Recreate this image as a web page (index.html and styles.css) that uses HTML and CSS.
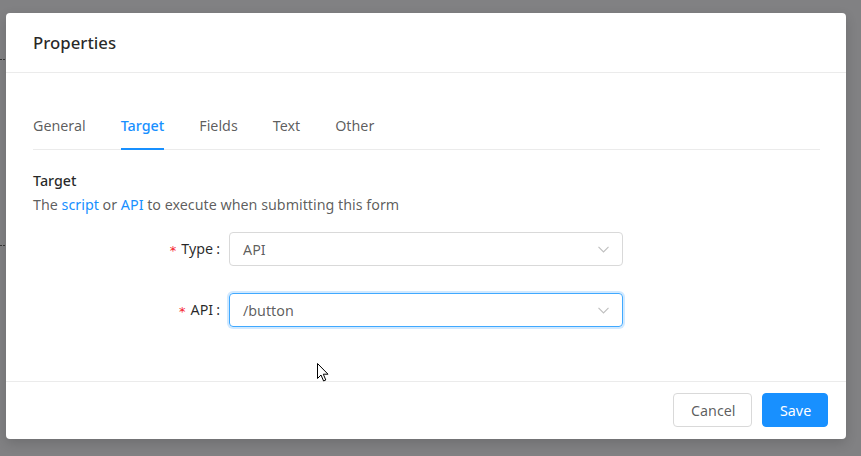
FILE: index.html
```html
<!DOCTYPE html>
<html lang="en">
<head>
<meta charset="utf-8">
<title>Properties</title>
<link rel="stylesheet" href="styles.css">
</head>
<body>
<div class="page-mark mark-a"></div>
<div class="page-mark mark-b"></div>
<div class="modal">
  <div class="modal-header">
    <div class="modal-title">Properties</div>
  </div>
  <div class="modal-body">
    <div class="tabs">
      <div class="tab">General</div>
      <div class="tab active">Target</div>
      <div class="tab">Fields</div>
      <div class="tab">Text</div>
      <div class="tab">Other</div>
    </div>
    <div class="section-title">Target</div>
    <div class="section-desc">The <a class="link">script</a> or <a class="link">API</a> to execute when submitting this form</div>
    <div class="form">
      <div class="form-row">
        <div class="form-label"><span class="req">*</span>Type<span class="colon">:</span></div>
        <div class="select">
          <span class="select-value">API</span>
          <svg class="arrow" width="11" height="7" viewBox="0 0 11 7"><path d="M0.5 0.8 L5.5 6 L10.5 0.8" fill="none" stroke="#bfbfbf" stroke-width="1.1"/></svg>
        </div>
      </div>
      <div class="form-row">
        <div class="form-label"><span class="req">*</span>API<span class="colon">:</span></div>
        <div class="select focused">
          <span class="select-value">/button</span>
          <svg class="arrow" width="11" height="7" viewBox="0 0 11 7"><path d="M0.5 0.8 L5.5 6 L10.5 0.8" fill="none" stroke="#bfbfbf" stroke-width="1.1"/></svg>
        </div>
      </div>
    </div>
  </div>
  <div class="modal-footer">
    <button class="btn">Cancel</button>
    <button class="btn btn-primary">Save</button>
  </div>
</div>
<svg class="cursor" width="13" height="20" viewBox="0 0 13 20"><path d="M0.5 0.5 L0.5 15.5 L4 12 L6.6 18 L8.8 17 L6.3 11.2 L11 11.2 Z" fill="#fff" stroke="#000" stroke-width="1" stroke-linejoin="miter"/></svg>
</body>
</html>
```
FILE: styles.css
```css
html, body {
  margin: 0;
  padding: 0;
}
body {
  background: #818183;
  width: 861px;
  height: 456px;
  overflow: hidden;
  font-family: "Noto Sans", "Open Sans", sans-serif;
  font-size: 14.3px;
  color: rgba(0, 0, 0, 0.65);
  position: relative;
  padding-top: 13px;
  box-sizing: border-box;
}
.page-mark {
  position: absolute;
  left: 0;
  width: 6px;
  height: 1px;
  background: repeating-linear-gradient(90deg, #333 0 2px, transparent 2px 3px);
}
.mark-a { top: 59px; }
.mark-b { top: 245px; }
.modal {
  margin-left: 6px;
  width: 840px;
  height: 426px;
  background: #fff;
  border-radius: 4px;
  display: flex;
  flex-direction: column;
  box-shadow: 0 4px 12px rgba(0, 0, 0, 0.15);
}
.modal-header {
  height: 59px;
  border-bottom: 1px solid #ebebeb;
  display: flex;
  align-items: center;
  padding: 0 27px;
}
.modal-title {
  font-size: 16.8px;
  font-weight: 500;
  color: rgba(0, 0, 0, 0.85);
  line-height: 24px;
}
.modal-body {
  flex: 1;
  padding: 31px 26px 0 27px;
}
.tabs {
  display: flex;
  gap: 35px;
  border-bottom: 1px solid #ebebeb;
  height: 45px;
}
.tab {
  height: 44px;
  line-height: 44px;
  border-bottom: 2px solid transparent;
  color: rgba(0, 0, 0, 0.65);
}
.tab.active {
  color: #1890ff;
  font-weight: 500;
  border-bottom-color: #1890ff;
}
.section-title {
  margin-top: 19px;
  line-height: 24px;
  color: rgba(0, 0, 0, 0.85);
  font-weight: 500;
}
.section-desc {
  line-height: 24px;
  color: rgba(0, 0, 0, 0.65);
}
.link {
  color: #1890ff;
  text-decoration: none;
}
.form {
  margin-top: 15px;
  display: flex;
  flex-direction: column;
  gap: 27px;
}
.form-row {
  display: flex;
  align-items: center;
}
.form-label {
  width: 187px;
  padding-right: 9px;
  text-align: right;
  color: rgba(0, 0, 0, 0.85);
  white-space: nowrap;
  line-height: 20px;
}
.req {
  color: #f5222d;
  font-family: "DejaVu Sans", sans-serif;
  font-size: 13px;
  margin-right: 5px;
  position: relative;
  top: 1px;
}
.colon {
  margin-left: 3px;
}
.select {
  width: 394px;
  height: 34px;
  box-sizing: border-box;
  border: 1px solid #d9d9d9;
  border-radius: 4px;
  display: flex;
  align-items: center;
  justify-content: space-between;
  padding: 0 13px 0 13px;
  color: rgba(0, 0, 0, 0.65);
}
.select.focused {
  border-color: #40a9ff;
  box-shadow: 0 0 0 2px rgba(24, 144, 255, 0.2);
}
.arrow {
  display: block;
}
.modal-footer {
  border-top: 1px solid #ebebeb;
  padding: 11px 18px 12px;
  display: flex;
  justify-content: flex-end;
  gap: 10px;
}
.btn {
  height: 34px;
  border-radius: 4px;
  border: 1px solid #d9d9d9;
  background: #fff;
  color: rgba(0, 0, 0, 0.65);
  font-family: inherit;
  font-size: 14.3px;
  padding: 0 17px;
  width: 79px;
}
.btn-primary {
  width: 66px;
  background: #1890ff;
  border-color: #1890ff;
  color: #fff;
}
.cursor {
  position: absolute;
  left: 317px;
  top: 363px;
}
```
